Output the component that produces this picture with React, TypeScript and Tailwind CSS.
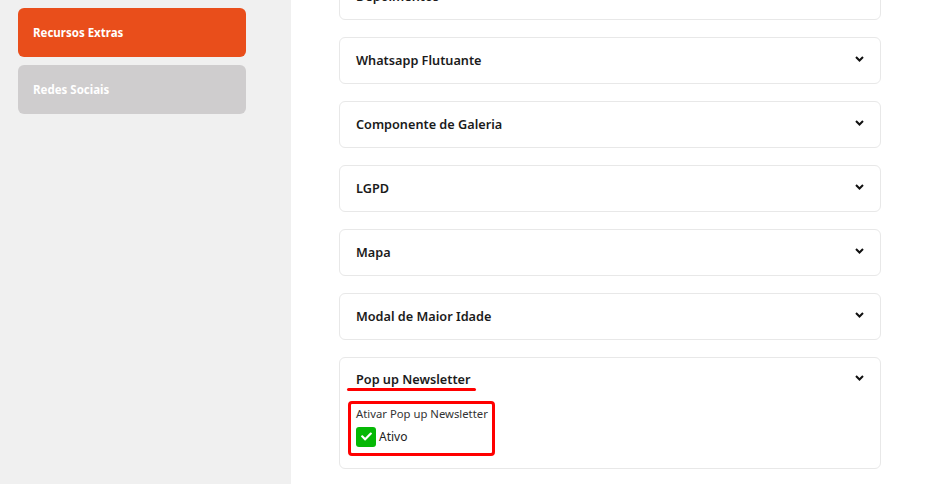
import { FaCheck } from "react-icons/fa";

const sections = [
  "Depoimentos",
  "Whatsapp Flutuante",
  "Componente de Galeria",
  "LGPD",
  "Mapa",
  "Modal de Maior Idade",
];

function Chevron() {
  return (
    <svg width="9" height="6" viewBox="0 0 9 6" className="shrink-0">
      <path d="M1 1l3.5 3.5L8 1" fill="none" stroke="#111" strokeWidth="2" />
    </svg>
  );
}

function SectionCard({ title }: { title: string }) {
  return (
    <div className="h-[47px] rounded-md border border-[#e8e8e8] bg-white flex items-center justify-between pl-4 pr-4">
      <p className="text-[12.7px] font-semibold text-[#1b1b1b]">{title}</p>
      <span className="-mt-1">
        <Chevron />
      </span>
    </div>
  );
}

export default function App() {
  return (
    <div
      className="w-[927px] h-[484px] flex overflow-hidden bg-white"
      style={{ fontFamily: '"Noto Sans", Lato, sans-serif' }}
    >
      <aside className="w-[291px] shrink-0 bg-[#f0f0f0] flex flex-col gap-2 pl-[18px] pt-2">
        <button className="w-[228px] h-[49px] rounded-md bg-[#e94e1b] text-white text-[11.5px] font-bold text-left px-[15px]">
          Recursos Extras
        </button>
        <button className="w-[228px] h-[49px] rounded-md bg-[#cfcdce] text-white text-[11.5px] font-bold text-left px-[15px]">
          Redes Sociais
        </button>
      </aside>

      <main className="flex-1 pl-12 pr-[46px]">
        <div className="mt-[-27px] flex flex-col gap-[17px]">
          {sections.map((s) => (
            <SectionCard key={s} title={s} />
          ))}

          <div className="h-[112px] rounded-md border border-[#e8e8e8] bg-white">
            <div className="relative h-[43px] flex items-center justify-between pl-4 pr-4">
              <p className="text-[12.7px] font-semibold text-[#1b1b1b]">Pop up Newsletter</p>
              <span className="-mt-1">
                <Chevron />
              </span>
              <div className="absolute left-[7px] top-[30px] w-[129px] h-[3px] rounded-full bg-[#ff0000]" />
            </div>
            <div className="ml-2 w-[147px] h-[55px] border-[3px] border-[#ff0000] rounded-sm pl-[5px] pt-[2px]">
              <p className="text-[11.3px] text-[#333]">Ativar Pop up Newsletter</p>
              <label className="flex items-center gap-[3px] mt-[4px]">
                <span className="w-5 h-5 rounded-[3px] bg-[#05b805] flex items-center justify-center">
                  <FaCheck className="text-white text-[11px]" />
                </span>
                <span className="text-[12px] text-[#222]">Ativo</span>
              </label>
            </div>
          </div>
        </div>
      </main>
    </div>
  );
}
